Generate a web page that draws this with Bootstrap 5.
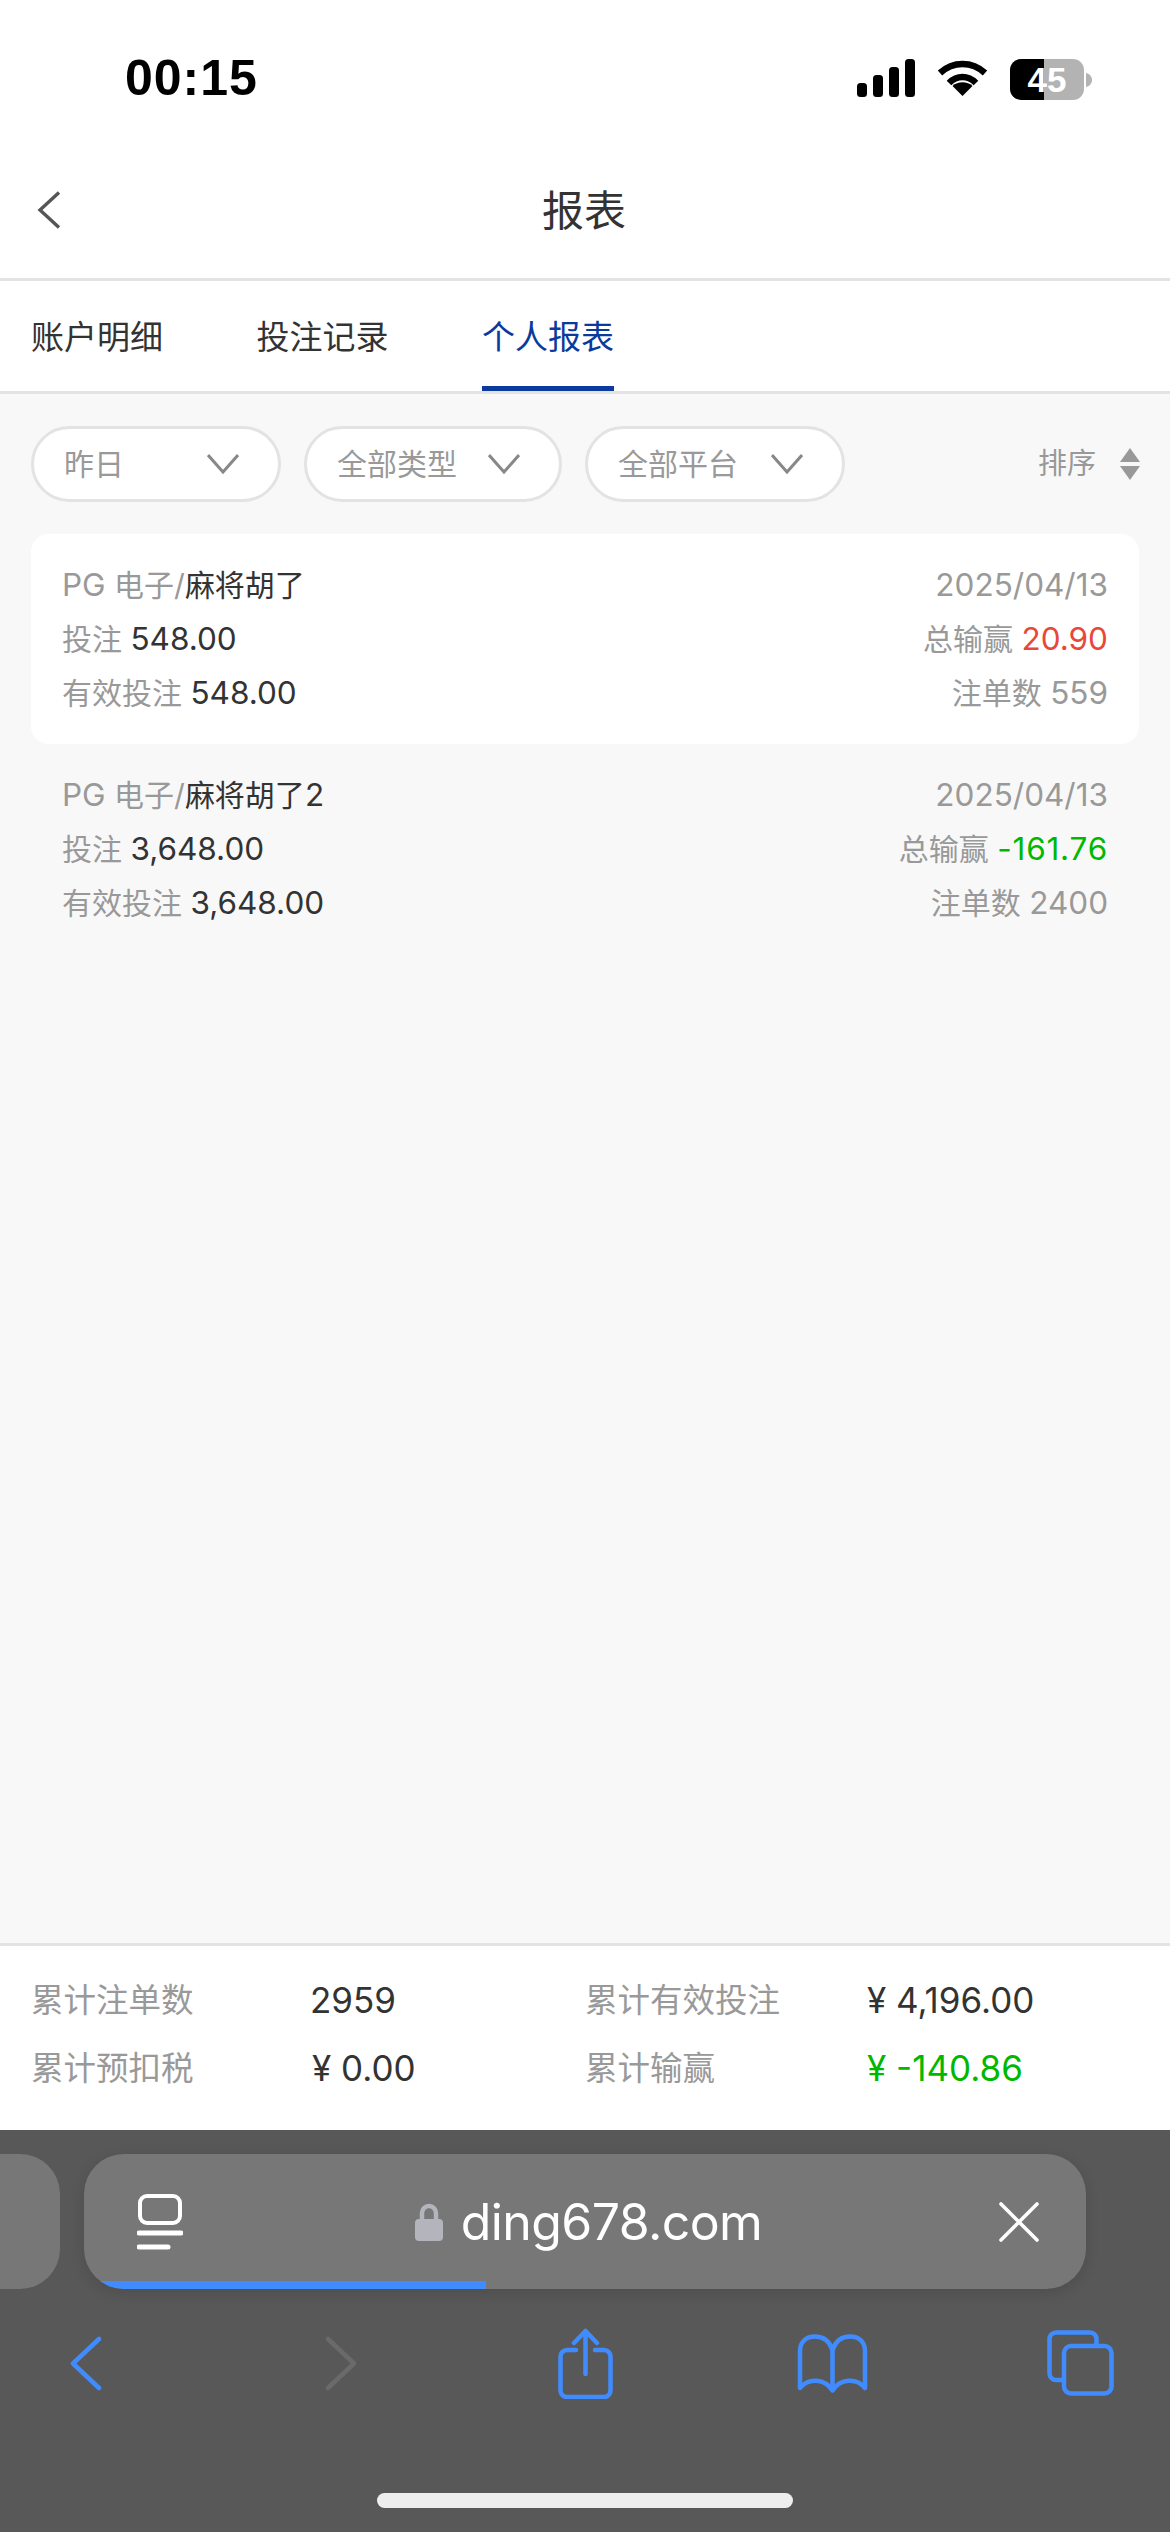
<!doctype html>
<html lang="zh"><head><meta charset="utf-8">
<link href="https://cdn.jsdelivr.net/npm/bootstrap@5.3.0/dist/css/bootstrap.min.css" rel="stylesheet">
<style>
html,body{margin:0;height:2532px;overflow:hidden}
body{font-family:Inter,"Noto Sans CJK SC",sans-serif;background:#f8f8f8;color:#333;font-size:30px;line-height:1.2}
.shell{width:1170px;height:2532px}
.stat{height:150px;background:#fff;padding:58px 78px 0 125px;align-items:flex-start}
.clock{font:700 50px/40px "Liberation Sans",sans-serif;color:#000;letter-spacing:1px}
.stat-icons{gap:22px;margin-top:1px}
.batt{width:74px;height:41px;border-radius:11px;background:linear-gradient(90deg,#000 46%,#b3b3b3 46%);color:#fff;font:700 35px/41px "Liberation Sans",sans-serif;text-align:center}
.batt-wrap{gap:2px}
.topbar{height:131px;background:#fff;border-bottom:3px solid #e3e3e3;padding:0 31px 9px 37px}
.topbar h1{font:400 42px/1 Inter,"Noto Sans CJK SC",sans-serif;color:#333;margin:0;flex:1;text-align:center;padding:2px 34px 0 0}
.tabbar{height:113px;background:#fff;border-bottom:3px solid #e3e3e3;padding:0 31px;gap:93.500px}
.tabitem{height:110px;font-size:33px;color:#333;width:132px;text-align:center;padding-top:37px;border-bottom:5px solid transparent;white-space:nowrap}
.tabitem.on{color:#0a3a9c;border-bottom-color:#0a3a9c}
.filters{height:140px;padding:32px 30px 0 31px;gap:23px;align-items:flex-start}
.pill{height:76px;border:3px solid #e3e3e3;border-radius:38px;background:#fff;color:#999;font-size:30px;padding:0 39px 0 30px;justify-content:space-between}
.p1{width:250px}.p2{width:258px}.p3{width:260px}
.sorter{color:#999;font-size:29px;gap:24px;margin-left:auto;height:76px}
.sorter svg{display:block}
.items{padding:0 31px}
.rec{height:210px;border-radius:18px;padding:24px 31px 0;display:flex;flex-direction:column}
.rec.white{background:#fff}
.rowline{height:54px;color:#999;white-space:nowrap}
.num{font-size:31.500px}
.wide{letter-spacing:.8px}
.dark{color:#333}.red{color:#e8483a}.green{color:#00b800}
.sum{height:187px;background:#fff;border-top:3px solid #e3e3e3;padding:20px 0 0}
.sumrow{height:68px;font-size:32.500px;color:#999}
.sumcell1{padding-left:31px}
.lab1{width:279px}.lab2{width:282px}
.sumnum{font-size:35px;line-height:40px}
.shift3{margin-left:2px}
.sumval{color:#333}
.browser{height:402px;background:#585858;overflow:hidden}
.tabs-strip{height:135px;margin-top:24px;gap:24px;margin-left:-1040px;width:2126px}
.sidepill{width:1100px;flex:none;height:135px;background:#777;border-radius:40px}
.urlpill{width:1002px;flex:none;height:135px;background:#777;border-radius:40px;box-shadow:0 4px 14px rgba(0,0,0,.12);position:relative;overflow:hidden;padding:0 46px 0 53px;justify-content:space-between}
.urlmid{gap:18px;color:#fff;font:400 50px/1 Inter,"Noto Sans",sans-serif;margin-right:4px;letter-spacing:-.6px}
.prog{position:absolute;left:0;bottom:0;height:8px;width:402px;background:#408cff}
.toolbar{height:80px;margin-top:34px;margin-left:-38px;width:1240px}
.toolcell{flex:none;width:248px}
.tn14{margin-left:14px}.tn7{margin-left:7px}.tn5{margin-left:5px}
.homebar{width:416px;height:15px;border-radius:8px;background:#eee;margin:90px 0 0 377px}
</style></head><body>
<div class="shell d-flex flex-column">
 <div class="stat d-flex justify-content-between">
  <div class="clock">00:15</div>
  <div class="stat-icons d-flex align-items-start">
   <svg width="58" height="38" viewBox="0 0 58 38"><rect x="0" y="24" width="10" height="14" rx="3.5"/><rect x="16" y="16" width="10" height="22" rx="3.5"/><rect x="32" y="8" width="10" height="30" rx="3.5"/><rect x="48" y="0" width="10" height="38" rx="3.5"/></svg>
   <svg width="51" height="38" viewBox="0 0 51 38" fill="none" stroke="#000" stroke-width="6.5"><path d="M3 14C16 2 35 2 48 14"/><path d="M12 24C20 16 31 16 39 24"/><path d="M25.500 37l-10-10c5-5 15-5 20 0z" fill="#000" stroke="none"/></svg>
   <div class="batt-wrap d-flex align-items-center"><div class="batt">45</div><svg width="6" height="14" viewBox="0 0 6 14"><path d="M0 0c4 1 6 4 6 7s-2 6-6 7z" fill="#b3b3b3"/></svg></div>
  </div>
 </div>
 <div class="topbar d-flex align-items-center">
  <svg width="26" height="38" viewBox="0 0 26 38" fill="none" stroke="#555" stroke-width="3.4"><path d="M22 1.500L3 19l19 17.500"/></svg>
  <h1>报表</h1>
 </div>
 <div class="tabbar d-flex">
  <div class="tabitem">账户明细</div><div class="tabitem">投注记录</div><div class="tabitem on">个人报表</div>
 </div>
 <div class="filters d-flex">
  <div class="pill p1 d-flex align-items-center"><span>昨日</span><svg width="32" height="20" viewBox="0 0 32 20" fill="none" stroke="#888" stroke-width="3"><path d="M1 1l15 17L31 1"/></svg></div>
  <div class="pill p2 d-flex align-items-center"><span>全部类型</span><svg width="32" height="20" viewBox="0 0 32 20" fill="none" stroke="#888" stroke-width="3"><path d="M1 1l15 17L31 1"/></svg></div>
  <div class="pill p3 d-flex align-items-center"><span>全部平台</span><svg width="32" height="20" viewBox="0 0 32 20" fill="none" stroke="#888" stroke-width="3"><path d="M1 1l15 17L31 1"/></svg></div>
  <div class="sorter d-flex align-items-center"><span>排序</span><svg width="20" height="32" viewBox="0 0 20 32" fill="#999"><path d="M10 0l10 14H0z"/><path d="M10 32L0 18h20z"/></svg></div>
 </div>
 <div class="items flex-grow-1">
  <div class="rec white">
   <div class="rowline d-flex justify-content-between align-items-center"><span><span class="num">PG</span> 电子/<span class="dark">麻将胡了</span></span><span class="num">2025/04/13</span></div>
   <div class="rowline d-flex justify-content-between align-items-center"><span>投注 <span class="dark num">548.00</span></span><span>总输赢 <span class="red num">20.90</span></span></div>
   <div class="rowline d-flex justify-content-between align-items-center"><span>有效投注 <span class="dark num">548.00</span></span><span>注单数 <span class="num">559</span></span></div>
  </div>
  <div class="rec">
   <div class="rowline d-flex justify-content-between align-items-center"><span><span class="num">PG</span> 电子/<span class="dark">麻将胡了<span class="num">2</span></span></span><span class="num">2025/04/13</span></div>
   <div class="rowline d-flex justify-content-between align-items-center"><span>投注 <span class="dark num">3,648.00</span></span><span>总输赢 <span class="green num wide">-161.76</span></span></div>
   <div class="rowline d-flex justify-content-between align-items-center"><span>有效投注 <span class="dark num">3,648.00</span></span><span>注单数 <span class="num">2400</span></span></div>
  </div>
 </div>
 <div class="sum">
  <div class="row g-0 sumrow align-items-center"><div class="col-6 d-flex align-items-center sumcell1"><span class="lab1">累计注单数</span><span class="sumval sumnum">2959</span></div><div class="col-6 d-flex align-items-center"><span class="lab2">累计有效投注</span><span class="sumval sumnum">¥ 4,196.00</span></div></div>
  <div class="row g-0 sumrow align-items-center"><div class="col-6 d-flex align-items-center sumcell1"><span class="lab1">累计预扣税</span><span class="sumval sumnum shift3">¥ 0.00</span></div><div class="col-6 d-flex align-items-center"><span class="lab2">累计输赢</span><span class="green sumnum">¥ -140.86</span></div></div>
 </div>
 <div class="browser">
  <div class="tabs-strip d-flex">
   <div class="sidepill"></div>
   <div class="urlpill d-flex align-items-center">
    <svg width="46" height="56" viewBox="0 0 46 56" fill="none" stroke="#fff" stroke-width="4"><rect x="3" y="2" width="40" height="27" rx="7"/><path d="M2 39h42" stroke-width="5" stroke-linecap="round"/><path d="M2 53h29" stroke-width="5" stroke-linecap="round"/></svg>
    <div class="urlmid d-flex align-items-center"><svg width="28" height="38" viewBox="0 0 28 38"><path d="M7 18V10a7 7 0 0 1 14 0v8" fill="none" stroke="#b4b4bc" stroke-width="4.500"/><rect x="0" y="16" width="28" height="22" rx="4" fill="#b4b4bc"/></svg><span>ding678.com</span></div>
    <svg width="42" height="42" viewBox="0 0 42 42" fill="none" stroke="#fff" stroke-width="3.600" stroke-linecap="round"><path d="M3 3l36 36M39 3L3 39"/></svg>
    <div class="prog"></div>
   </div>
  </div>
  <div class="toolbar d-flex">
   <div class="toolcell d-flex justify-content-center align-items-center"><svg width="32" height="55" viewBox="0 0 32 55" fill="none" stroke="#408cff" stroke-width="4.500" stroke-linecap="round" stroke-linejoin="round"><path d="M29 3L3 27.500 29 52"/></svg></div>
   <div class="toolcell d-flex justify-content-center align-items-center"><svg class="tn14" width="32" height="55" viewBox="0 0 32 55" fill="none" stroke="#6a6a6a" stroke-width="4.500" stroke-linecap="round" stroke-linejoin="round"><path d="M3 3l26 24.500L3 52"/></svg></div>
   <div class="toolcell d-flex justify-content-center align-items-center"><svg class="tn7" width="55" height="71" viewBox="0 0 55 71" fill="none" stroke="#408cff" stroke-width="4.500" stroke-linecap="round" stroke-linejoin="round"><path d="M18 22H9a6.500 6.500 0 0 0-6.500 6.500v34A6.500 6.500 0 0 0 9 69h37a6.500 6.500 0 0 0 6.500-6.500v-34A6.500 6.500 0 0 0 46 22h-9"/><path d="M27.500 46V3M16 15L27.500 3 39 15"/></svg></div>
   <div class="toolcell d-flex justify-content-center align-items-center"><svg class="tn5" width="71" height="59" viewBox="0 0 71 59" fill="none" stroke="#408cff" stroke-width="4.500" stroke-linejoin="round"><path d="M35.500 16C32 6 25 2.500 18 2.500 9 2.500 3 8 3 17v37c9-11 25-9 32.500 2.500C43 45 59 43 68 54V17c0-9-6-14.500-15-14.500-7 0-14 3.500-17.500 13.500z"/><path d="M35.500 16v40"/></svg></div>
   <div class="toolcell d-flex justify-content-center align-items-center"><svg class="tn5" width="67" height="66" viewBox="0 0 67 66" fill="none" stroke="#408cff" stroke-width="4.500" stroke-linejoin="round"><path d="M16 50H9a6.500 6.500 0 0 1-6.500-6.500V9A6.500 6.500 0 0 1 9 2.500h34A6.500 6.500 0 0 1 49.500 9v6"/><rect x="17" y="16" width="47.500" height="47.500" rx="7"/></svg></div>
  </div>
  <div class="homebar"></div>
 </div>
</div>
</body></html>
